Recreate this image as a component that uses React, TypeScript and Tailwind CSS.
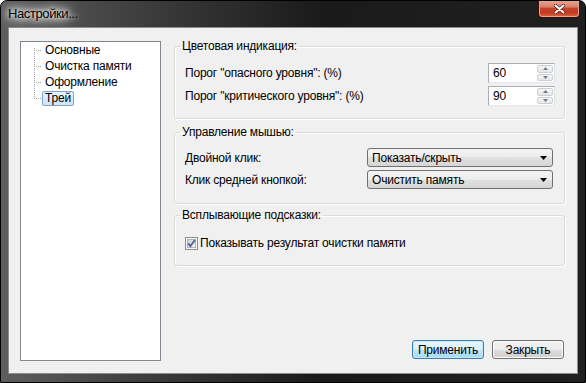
import React from "react";

const treeItems = ["Основные", "Очистка памяти", "Оформление", "Трей"];

function TreeLine({ first, last }: { first: boolean; last: boolean }) {
  return (
    <svg width="8" height="16" className="shrink-0">
      <line x1="0.5" x2="0.5" y1={first ? 6 : 0} y2={last ? 9 : 16} stroke="#a0a0a0" strokeDasharray="1 1" />
      <line x1="2" x2="8" y1="8.5" y2="8.5" stroke="#a0a0a0" strokeDasharray="1 1" />
    </svg>
  );
}

function SpinButton({ up }: { up?: boolean }) {
  return (
    <div className="flex flex-1 items-center justify-center rounded-[2px] border border-[#c9cfd8] bg-[linear-gradient(#f7f7f7,#e6e6e6)]">
      <svg width="5" height="3">
        <path d={up ? "M0 3h5L2.5 0z" : "M0 0h5L2.5 3z"} fill="#6b7a8c" />
      </svg>
    </div>
  );
}

function Spinner({ value }: { value: string }) {
  return (
    <div className="flex h-[20px] w-[67px] border border-[#abadb3] border-b-[#e3e9ef] border-r-[#dbdfe6] bg-white">
      <div className="flex-1 pl-[4px] leading-[18px]">{value}</div>
      <div className="flex w-[18px] flex-col gap-[1px] p-[1px]">
        <SpinButton up />
        <SpinButton />
      </div>
    </div>
  );
}

function Combo({ value }: { value: string }) {
  return (
    <div className="flex h-[19px] w-[186px] items-center rounded-[3px] border border-[#707070] bg-[linear-gradient(#f4f4f4,#ececec_50%,#e0e0e0_50%,#d6d6d6)] pl-[4px] pr-[5px]">
      <span className="flex-1 leading-[14px]">{value}</span>
      <svg width="7" height="4">
        <path d="M0 0h7L3.5 4z" fill="#000" />
      </svg>
    </div>
  );
}

function Group({ title, className, children }: { title: string; className: string; children: React.ReactNode }) {
  return (
    <fieldset
      className={`rounded-[3px] border border-[#dadada] shadow-[inset_1px_1px_0_#fff,1px_1px_0_#fff] ${className}`}
    >
      <legend className="ml-[5px] px-[2px] leading-[14px]">{title}</legend>
      {children}
    </fieldset>
  );
}

function Button({ label, primary }: { label: string; primary?: boolean }) {
  return (
    <button
      className={
        primary
          ? "h-[19px] w-[72px] rounded-[3px] border border-[#3c7fb1] bg-[linear-gradient(#eaf6fd,#d9f0fc_50%,#bee6fd_50%,#a7d9f5)] leading-[14px] shadow-[inset_0_0_0_1px_#c3e6fa]"
          : "h-[19px] w-[72px] rounded-[3px] border border-[#707070] bg-[linear-gradient(#f2f2f2,#ebebeb_50%,#dddddd_50%,#cfcfcf)] leading-[14px] shadow-[inset_0_0_0_1px_#fcfcfc]"
      }
    >
      {label}
    </button>
  );
}

export default function App() {
  return (
    <div className="flex h-[383px] w-[586px] flex-col overflow-hidden rounded-t-[7px] border border-black bg-[linear-gradient(to_right,#5e5e5e,#3c3c3c_25%,#1a1a1a_55%,#202020)] font-['Liberation_Sans',Arial,sans-serif] text-[12px] tracking-[-0.2px] text-black">
      {/* title bar */}
      <div className="flex h-[26px] shrink-0 items-start">
        <span className="ml-[7px] mt-[5px] text-[13px] leading-[16px] tracking-[-0.4px] text-black [text-shadow:0_0_4px_#fff,0_0_8px_#fff,0_0_12px_#fff,0_0_16px_#eee]">
          Настройки...
        </span>
        <div className="ml-auto mr-[5px] -mt-[1px] flex h-[18px] w-[42px] items-center justify-center rounded-b-[4px] border border-t-0 border-[#3a0c04] bg-[linear-gradient(#e8a898,#d8826c_40%,#c4432a_50%,#c23a1f_75%,#e06a48)] shadow-[inset_0_0_0_1px_#e9a58f]">
          <svg width="11" height="10" viewBox="0 0 11 10">
            <path d="M1.5 1.5l8 7M9.5 1.5l-8 7" stroke="#5a1a10" strokeWidth="3.4" strokeLinecap="round" />
            <path d="M1.5 1.5l8 7M9.5 1.5l-8 7" stroke="#fff" strokeWidth="2" strokeLinecap="round" />
          </svg>
        </div>
      </div>

      {/* client area */}
      <div className="ml-[7px] flex h-[347px] w-[570px] items-start border border-[#8c8c8c] bg-[#f0f0f0]">
        <div className="ml-[11px] mt-[13px] h-[320px] w-[141px] shrink-0 border border-[#828790] bg-white pl-[13px]">
          {treeItems.map((item, i) => (
            <div key={item} className="flex h-[16px] items-center">
              <TreeLine first={i === 0} last={i === treeItems.length - 1} />
              <span
                className={
                  i === treeItems.length - 1
                    ? "mt-[1px] h-[15px] rounded-[2px] border border-[#7da2ce] bg-[linear-gradient(#ebf4fd,#cfe4fa)] px-[2px] leading-[13px]"
                    : "h-[15px] border border-transparent px-[2px] leading-[13px]"
                }
              >
                {item}
              </span>
            </div>
          ))}
        </div>

        <div className="ml-[13px] mt-[11px] flex w-[391px] flex-col">
          <Group title="Цветовая индикация:" className="h-[80px]">
            <div className="flex flex-col gap-[3px] pl-[10px] pr-[9px] pt-[10px]">
              <div className="flex h-[20px] items-center justify-between">
                <span>Порог "опасного уровня": (%)</span>
                <Spinner value="60" />
              </div>
              <div className="flex h-[20px] items-center justify-between">
                <span>Порог "критического уровня": (%)</span>
                <Spinner value="90" />
              </div>
            </div>
          </Group>

          <Group title="Управление мышью:" className="mt-[6px] h-[79px]">
            <div className="flex flex-col gap-[3px] pl-[10px] pr-[11px] pt-[9px]">
              <div className="flex h-[19px] items-center justify-between">
                <span>Двойной клик:</span>
                <Combo value="Показать/скрыть" />
              </div>
              <div className="flex h-[19px] items-center justify-between">
                <span>Клик средней кнопкой:</span>
                <Combo value="Очистить память" />
              </div>
            </div>
          </Group>

          <Group title="Всплывающие подсказки:" className="mt-[4px] h-[58px]">
            <div className="mt-[13px] flex h-[16px] items-center pl-[10px]">
              <svg width="13" height="13" className="shrink-0">
                <defs>
                  <linearGradient id="cb" x1="0" y1="0" x2="1" y2="1">
                    <stop offset="0" stopColor="#cbcfd5" />
                    <stop offset="1" stopColor="#f7f7f7" />
                  </linearGradient>
                </defs>
                <rect x="0.5" y="0.5" width="12" height="12" fill="#f4f4f4" stroke="#8e8f8f" />
                <rect x="2.5" y="2.5" width="8" height="8" fill="url(#cb)" stroke="#aeb3b9" />
                <path d="M3.2 6.4l2.2 2.6L10 3" fill="none" stroke="#4a5f97" strokeWidth="1.8" />
              </svg>
              <span className="ml-[2px]">Показывать результат очистки памяти</span>
            </div>
          </Group>

          <div className="mt-[74px] flex justify-end gap-[8px] pr-[1px]">
            <Button label="Применить" primary />
            <Button label="Закрыть" />
          </div>
        </div>
      </div>
    </div>
  );
}
